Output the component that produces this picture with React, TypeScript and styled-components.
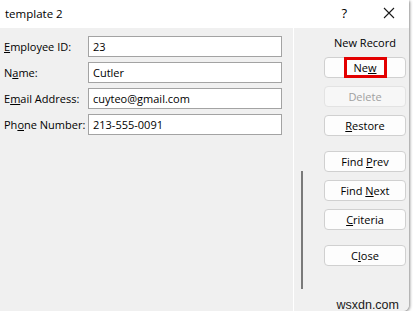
import styled, { createGlobalStyle } from "styled-components";

const GlobalStyle = createGlobalStyle`
    html, body {
        margin: 0;
        padding: 0;
        background: #ffffff;
    }
    body {
        font-family: "Open Sans", "Noto Sans", sans-serif;
        font-size: 11px;
        color: #000000;
    }
`;

const fields = [
    {label: 'Employee ID:', key: 'E', rest: 'mployee ID:', pre: '', value: '23'},
    {label: 'Name:', pre: 'N', key: 'a', rest: 'me:', value: 'Cutler'},
    {label: 'Email Address:', pre: 'E', key: 'm', rest: 'ail Address:', value: 'cuyteo@gmail.com'},
    {label: 'Phone Number:', pre: 'Ph', key: 'o', rest: 'ne Number:', value: '213-555-0091'},
];

type Btn = { pre: string; key: string; rest: string; disabled?: boolean; gap: number; marked?: boolean };

const buttons: Btn[] = [
    {pre: 'Ne', key: 'w', rest: '', marked: true, gap: 0},
    {pre: 'Delete', key: '', rest: '', disabled: true, gap: 8},
    {pre: '', key: 'R', rest: 'estore', gap: 8},
    {pre: 'Find ', key: 'P', rest: 'rev', gap: 15},
    {pre: 'Find ', key: 'N', rest: 'ext', gap: 8},
    {pre: '', key: 'C', rest: 'riteria', gap: 8},
    {pre: 'C', key: 'l', rest: 'ose', gap: 15},
];

export default function App() {
    return (
        <>
            <GlobalStyle/>
            <Window>
                <TitleBar>
                    <Title>template 2</Title>
                    <TitleButtons>
                        <HelpMark>?</HelpMark>
                        <CloseIcon width="12" height="12" viewBox="0 0 12 12">
                            <path d="M1 1 L11 11 M11 1 L1 11" stroke="#1a1a1a" strokeWidth="1.1"/>
                        </CloseIcon>
                    </TitleButtons>
                </TitleBar>
                <Body>
                    <FieldsPane>
                        {fields.map((f) => (
                            <FieldRow key={f.label}>
                                <Label>{f.pre}<u>{f.key}</u>{f.rest}</Label>
                                <Input>{f.value}</Input>
                            </FieldRow>
                        ))}
                    </FieldsPane>
                    <Divider/>
                    <ScrollColumn>
                        <Thumb/>
                    </ScrollColumn>
                    <ButtonsPane>
                        <RecordCaption>New Record</RecordCaption>
                        {buttons.map((b, i) => (
                            <FormButton key={i} $disabled={b.disabled} $gap={b.gap}>
                                <ButtonText $marked={b.marked}>
                                    {b.pre}{b.key && <u>{b.key}</u>}{b.rest}
                                </ButtonText>
                            </FormButton>
                        ))}
                        <Watermark>wsxdn.com</Watermark>
                    </ButtonsPane>
                </Body>
            </Window>
        </>
    );
}

const Window = styled.div`
    width: 409px;
    height: 311px;
    display: flex;
    flex-direction: column;
    border-bottom-right-radius: 6px;
    overflow: hidden;
    box-shadow: 1px 1px 3px rgba(0, 0, 0, 0.45);
    background: #f0f0f0;
`;

const TitleBar = styled.div`
    height: 28px;
    flex-shrink: 0;
    background: #ffffff;
    display: flex;
    align-items: center;
    justify-content: space-between;
    padding-left: 5px;
    padding-right: 14px;
`;

const Title = styled.span`
    font-size: 11.5px;
    margin-top: -2px;
`;

const TitleButtons = styled.div`
    display: flex;
    align-items: center;
    gap: 36px;
`;

const HelpMark = styled.span`
    font-size: 13px;
    margin-top: -2px;
`;

const CloseIcon = styled.svg`
    display: block;
    margin-top: -2px;
`;

const Body = styled.div`
    flex: 1;
    display: flex;
    background: #f0f0f0;
`;

const FieldsPane = styled.div`
    width: 289px;
    padding: 8px 0 0 4px;
    display: flex;
    flex-direction: column;
    gap: 5px;
`;

const FieldRow = styled.div`
    display: flex;
    align-items: center;
    height: 21px;
`;

const Label = styled.span`
    width: 84px;
    white-space: nowrap;
`;

const Input = styled.div`
    box-sizing: border-box;
    width: 194px;
    height: 21px;
    background: #ffffff;
    border: 1px solid #a3a3a3;
    padding: 0 4px;
    line-height: 19px;
`;

const Divider = styled.div`
    width: 1px;
    background: #ffffff;
`;

const ScrollColumn = styled.div`
    width: 30px;
    padding: 143px 0 0 7px;
    box-sizing: border-box;
`;

const Thumb = styled.div`
    width: 2px;
    height: 118px;
    background: #7a7a7a;
`;

const ButtonsPane = styled.div`
    width: 82px;
    display: flex;
    flex-direction: column;
    padding-top: 7px;
    position: relative;
`;

const RecordCaption = styled.div`
    text-align: center;
    height: 16px;
    line-height: 16px;
    margin-bottom: 6px;
`;

const FormButton = styled.div<{ $disabled?: boolean; $gap: number }>`
    box-sizing: border-box;
    height: 21px;
    margin-top: ${(p) => p.$gap}px;
    border: 1px solid ${(p) => (p.$disabled ? '#e3e3e3' : '#d0d0d0')};
    border-radius: 4px;
    background: ${(p) => (p.$disabled ? '#f7f7f7' : '#fdfdfd')};
    color: ${(p) => (p.$disabled ? '#a0a0a0' : '#000000')};
    display: flex;
    align-items: center;
    justify-content: center;
`;

const ButtonText = styled.span<{ $marked?: boolean }>`
    position: relative;
    &::after {
        content: '';
        display: ${(p) => (p.$marked ? 'block' : 'none')};
        position: absolute;
        left: -10px;
        right: -10px;
        top: -3px;
        bottom: -3px;
        border: 3px solid #e30000;
    }
`;

const Watermark = styled.div`
    position: absolute;
    right: 7px;
    bottom: -1px;
    font-family: "Liberation Sans", Arial, sans-serif;
    font-size: 12.5px;
    color: #1a1a1a;
`;
